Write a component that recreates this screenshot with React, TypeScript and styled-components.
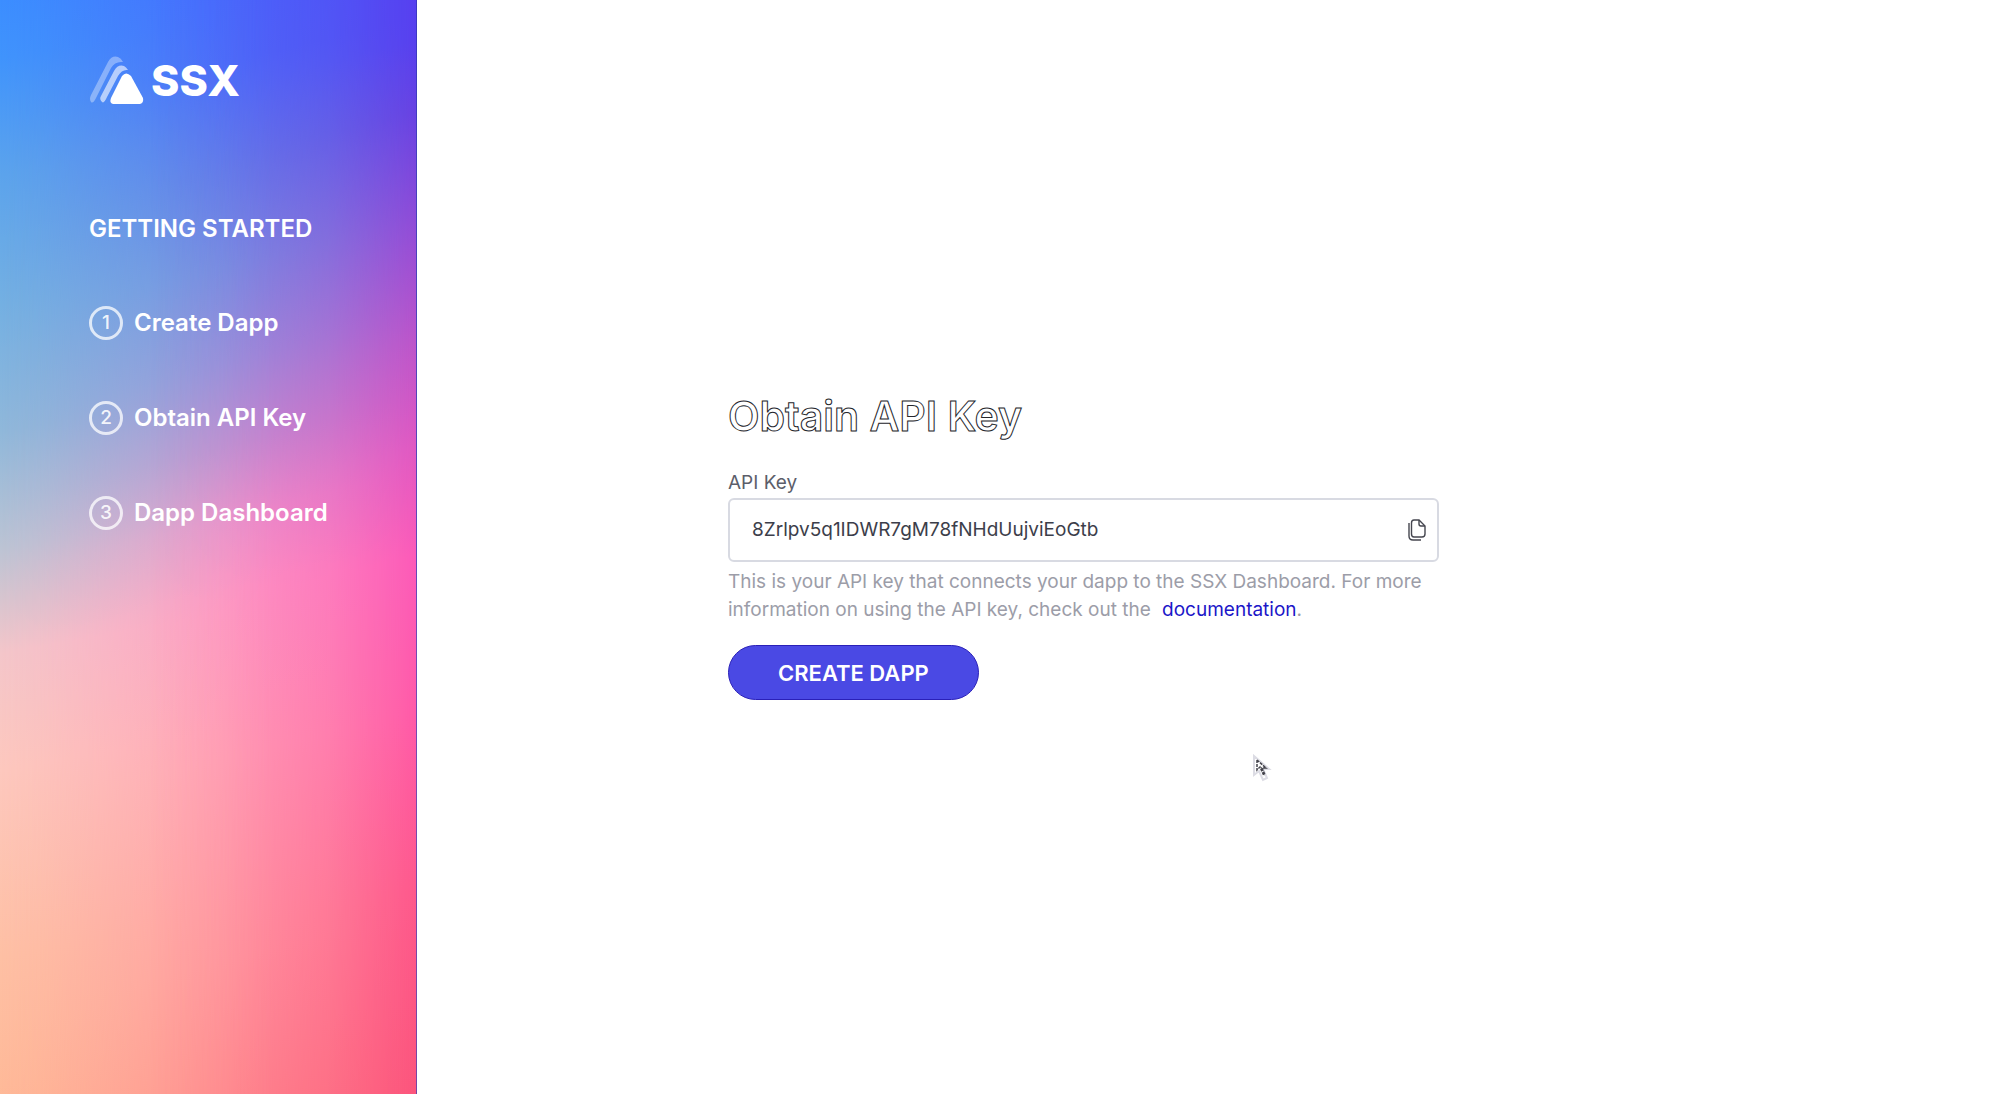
import React, { useState } from "react";
import styled, { createGlobalStyle } from "styled-components";

const GlobalStyle = createGlobalStyle`
  *, *::before, *::after { box-sizing: border-box; }
  body {
    margin: 0;
    background: #fff;
    font-family: Inter, "Liberation Sans", sans-serif;
  }
`;

const Page = styled.div`
  display: flex;
  min-height: 100vh;
`;

const Sidebar = styled.aside`
  position: relative;
  isolation: isolate;
  flex: 0 0 417px;
  padding: 56px 24px 56px 89px;
  color: #fff;
  background: linear-gradient(170deg, #3c8eff 0%, #4094fc 5%, #5ca4ec 15%, #74b0e2 26%, #90b8da 37%, #bcc4d4 47%, #f4c6ca 56%, #fdc8be 66%, #fec0a4 82%, #ffb692 100%);
  border-right: 1px solid rgba(60, 20, 170, 0.7);

  &::before,
  &::after {
    content: "";
    position: absolute;
    inset: 0;
    z-index: -1;
  }

  &::before {
    background: linear-gradient(166deg, #4668ff 0%, #4c6cfa 10%, #647eea 19%, #7890e2 27%, #9894dc 35%, #c094d2 42%, #ec98cc 48%, #fe9cc4 54%, #ffa2b4 68%, #ff9aa0 85%, #ff8a8c 100%);
    mask-image: linear-gradient(90deg, transparent, rgba(0, 0, 0, 0.12) 10%, rgba(0, 0, 0, 0.5) 32%, rgba(0, 0, 0, 0.88) 54%, #000 66%);
  }

  &::after {
    background: linear-gradient(166deg, #5440f4 0%, #5840ee 12%, #6842e2 18%, #944cd6 28%, #bc54ca 37%, #e058c2 46%, #fc5ab8 55%, #ff5aa8 68%, #fe588c 83%, #fc547c 100%);
    mask-image: linear-gradient(90deg, transparent 36%, rgba(0, 0, 0, 0.12) 54%, rgba(0, 0, 0, 0.5) 79%, rgba(0, 0, 0, 0.88) 95%, #000);
  }
`;

const Brand = styled.div`
  display: flex;
  align-items: center;
  gap: 6px;
  height: 48px;
  font-size: 43px;
  line-height: 48px;
  font-weight: 800;
`;

const SectionTitle = styled.h2`
  margin: 109px 0 0;
  font-size: 24px;
  line-height: 32px;
  font-weight: 600;
`;

const Steps = styled.ol`
  display: grid;
  gap: 61px;
  margin: 61px 0 0;
  padding: 0;
  list-style: none;
`;

const Step = styled.li`
  display: flex;
  align-items: center;
  gap: 11px;
  font-size: 24px;
  line-height: 34px;
  font-weight: 600;
`;

const StepNumber = styled.span`
  display: grid;
  place-items: center;
  width: 34px;
  height: 34px;
  border: 3px solid rgba(255, 255, 255, 0.75);
  border-radius: 50%;
  color: rgba(255, 255, 255, 0.9);
  font-size: 19px;
  line-height: 24px;
  font-weight: 500;
`;

const Main = styled.main`
  flex: 1;
  display: flex;
  align-items: center;
  justify-content: center;
  padding: 24px 24px 26px;
`;

const Form = styled.form`
  width: 100%;
  max-width: 711px;
  margin-right: 250px;
`;

const Title = styled.h1`
  margin: 0 0 31px;
  font-size: 41px;
  line-height: 48px;
  font-weight: 600;
  color: #fff;
  -webkit-text-stroke: 1px #24252b;
`;

const Label = styled.label`
  display: block;
  font-size: 19px;
  line-height: 24px;
  color: #5c5e6a;
`;

const Field = styled.div`
  display: flex;
  align-items: center;
  height: 64px;
  margin-top: 3px;
  padding: 0 8px 0 22px;
  border: 2px solid #d8dae2;
  border-radius: 6px;
`;

const KeyInput = styled.input`
  flex: 1;
  min-width: 0;
  padding: 0;
  border: 0;
  outline: 0;
  background: transparent;
  color: #3c3e4a;
  font: 400 19px/24px Inter, "Liberation Sans", sans-serif;
`;

const CopyButton = styled.button`
  display: grid;
  place-items: center;
  width: 24px;
  height: 32px;
  padding: 0;
  border: 0;
  background: none;
  color: #45464f;
`;

const Hint = styled.p`
  margin: 6px 0 21px;
  font-size: 19px;
  line-height: 28px;
  color: #9c9da8;
`;

const DocLink = styled.a`
  margin-left: 6px;
  color: #1c16c8;
  text-decoration: none;
`;

const Submit = styled.button`
  height: 55px;
  padding: 0 49px;
  border: 1px solid #2a20b8;
  border-radius: 28px;
  background: #4a49e4;
  color: #fff;
  font: 600 22px/28px Inter, "Liberation Sans", sans-serif;
`;

const Pointer = styled.svg`
  position: absolute;
  left: 1252px;
  top: 754px;
  pointer-events: none;
`;

const steps = ["Create Dapp", "Obtain API Key", "Dapp Dashboard"];

function Logo() {
  return (
    <svg width="56" height="48" viewBox="0 0 56 48" fill="#fff" aria-hidden="true">
      <path opacity=".35" d="M2 46Q0 43 2 39L19 6Q23-1 29 1Q32 2 34 6Q26 5 22 12L7 42Q4 48 2 46Z" />
      <path opacity=".6" d="M13 46Q10 43 12 40L25 15Q29 8 35 10Q37 11 39 14Q33 13 29 20L18 41Q15 48 13 46Z" />
      <path d="M33 20Q37 15 42 20L54 42Q55 47 51 48H24Q20 47 22 42Z" />
    </svg>
  );
}

export default function App() {
  const [apiKey, setApiKey] = useState("8Zrlpv5q1IDWR7gM78fNHdUujviEoGtb");
  return (
    <>
      <GlobalStyle />
      <Page>
        <Sidebar>
          <Brand>
            <Logo />
            <span>SSX</span>
          </Brand>
          <SectionTitle>GETTING STARTED</SectionTitle>
          <Steps>
            {steps.map((name, i) => (
              <Step key={name}>
                <StepNumber>{i + 1}</StepNumber>
                {name}
              </Step>
            ))}
          </Steps>
        </Sidebar>
        <Main>
          <Form onSubmit={(e) => e.preventDefault()}>
            <Title>Obtain API Key</Title>
            <Label htmlFor="api-key">API Key</Label>
            <Field>
              <KeyInput id="api-key" value={apiKey} onChange={(e) => setApiKey(e.target.value)} />
              <CopyButton type="button" aria-label="Copy API key">
                <svg width="18" height="22" viewBox="0 0 18 22" fill="none" stroke="currentColor" strokeWidth="1.4" aria-hidden="true">
                  <path d="M6 1H11L17 7V15Q17 18 14 18H6Q3.500 18 3.500 15V4Q3.500 1 6 1Z" />
                  <path d="M11 1V5Q11 7 13 7H17" />
                  <path d="M1 4V17Q1 21 5 21H13" />
                </svg>
              </CopyButton>
            </Field>
            <Hint>
              This is your API key that connects your dapp to the SSX Dashboard. For more information on using the API key, check out the <DocLink href="#docs">documentation</DocLink>.
            </Hint>
            <Submit type="submit">CREATE DAPP</Submit>
          </Form>
        </Main>
      </Page>
      <Pointer width="20" height="28" viewBox="0 0 20 28" aria-hidden="true">
        <path d="M2 2V21L7 17L11 26L15 24L11 15H17Z" fill="#fff" stroke="#dcdce4" strokeWidth="2" />
        <path d="M5 6V16L8 13L12 22M5 6L14 14H10L13 21" fill="none" stroke="#44444c" strokeWidth="1.500" strokeDasharray="3 1" />
      </Pointer>
    </>
  );
}
